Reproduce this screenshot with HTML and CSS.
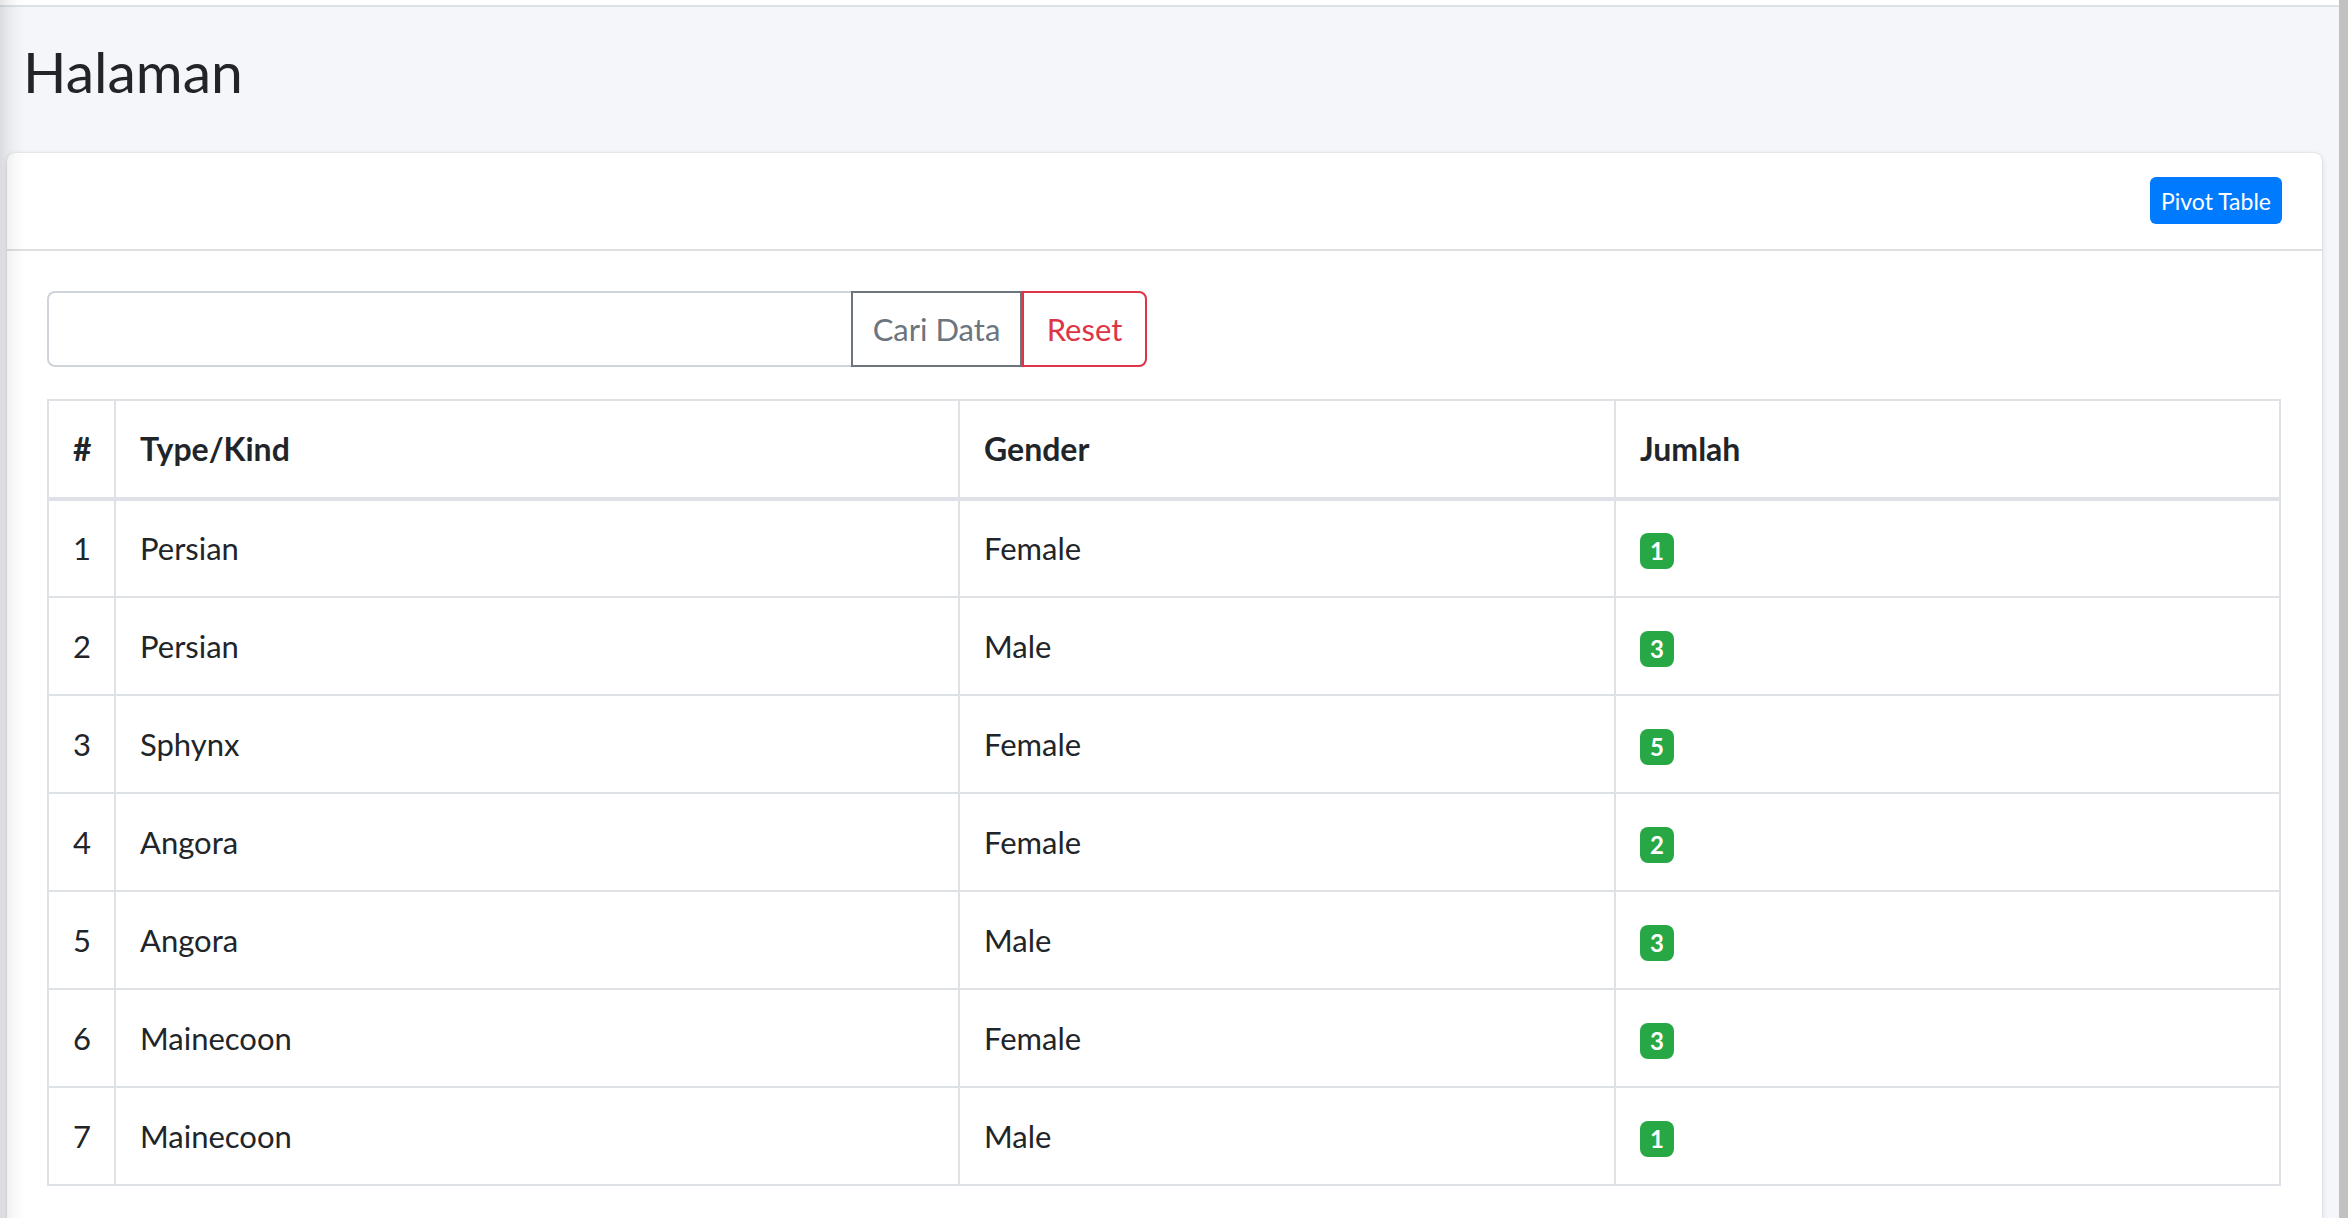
FILE: index.html
```html
<!DOCTYPE html>
<html lang="id">
<head>
<meta charset="utf-8">
<title>Halaman</title>
<link rel="stylesheet" href="styles.css">
</head>
<body>
<div class="page">
  <div class="main">
    <div class="topbar"></div>
    <div class="content-header">
      <h1>Halaman</h1>
    </div>
    <div class="card">
      <div class="card-header">
        <button class="btn-pivot">Pivot Table</button>
      </div>
      <div class="card-body">
        <div class="input-group">
          <input class="form-control" type="text">
          <button class="btn btn-search">Cari Data</button>
          <button class="btn btn-reset">Reset</button>
        </div>
        <table class="table">
          <colgroup>
            <col class="c-no"><col class="c-type"><col class="c-gender"><col class="c-jumlah">
          </colgroup>
          <thead>
            <tr><th>#</th><th>Type/Kind</th><th>Gender</th><th>Jumlah</th></tr>
          </thead>
          <tbody>
            <tr><td>1</td><td>Persian</td><td>Female</td><td><span class="badge">1</span></td></tr>
            <tr><td>2</td><td>Persian</td><td>Male</td><td><span class="badge">3</span></td></tr>
            <tr><td>3</td><td>Sphynx</td><td>Female</td><td><span class="badge">5</span></td></tr>
            <tr><td>4</td><td>Angora</td><td>Female</td><td><span class="badge">2</span></td></tr>
            <tr><td>5</td><td>Angora</td><td>Male</td><td><span class="badge">3</span></td></tr>
            <tr><td>6</td><td>Mainecoon</td><td>Female</td><td><span class="badge">3</span></td></tr>
            <tr><td>7</td><td>Mainecoon</td><td>Male</td><td><span class="badge">1</span></td></tr>
          </tbody>
        </table>
      </div>
    </div>
    <div class="edge-shadow"></div>
  </div>
  <div class="scrollbar"></div>
</div>
</body>
</html>
```

FILE: styles.css
```css
* { box-sizing: border-box; }
html, body { margin: 0; padding: 0; }
body {
  background: #f4f6f9;
  font-family: "Lato", "Liberation Sans", sans-serif;
  color: #212529;
  font-size: 32px;
  line-height: 1.5;
  overflow: hidden;
}
.page {
  display: flex;
  height: 1218px;
  overflow: hidden;
}
.main {
  flex: 1;
  position: relative;
  min-width: 0;
}
.scrollbar {
  width: 9px;
  background: #c1c1c1;
}
.topbar {
  height: 7px;
  background: #fff;
  border-bottom: 2px solid #dee2e6;
}
.content-header {
  padding: 30px 23px 0;
  height: 146px;
}
.content-header h1 {
  margin: 0;
  font-size: 57px;
  font-weight: 400;
  line-height: 1.2;
}
.card {
  margin: 0 17px 0 7px;
  background: #fff;
  border-radius: 8px;
  box-shadow: 0 0 2px rgba(0,0,0,.125), 0 2px 6px rgba(0,0,0,.12);
}
.card-header {
  display: flex;
  justify-content: flex-end;
  padding: 24px 40px 25px;
  border-bottom: 2px solid #dfdfdf;
}
.btn-pivot {
  height: 47px;
  padding: 0 11px;
  border: none;
  border-radius: 6px;
  background: #007bff;
  color: #fff;
  font-family: inherit;
  font-size: 23px;
}
.card-body {
  padding: 40px 40px 40px 40px;
}
.input-group {
  display: flex;
  width: 1100px;
  height: 76px;
  margin-bottom: 32px;
}
.form-control {
  width: 804px;
  height: 76px;
  border: 2px solid #ced4da;
  border-right: none;
  border-radius: 8px 0 0 8px;
  font-family: inherit;
  font-size: 32px;
  padding: 0 24px;
}
.btn {
  height: 76px;
  background: #fff;
  font-family: inherit;
  font-size: 31px;
  padding: 0;
  border: 2px solid;
}
.btn-search {
  width: 171px;
  color: #6c757d;
  border-color: #6c757d;
}
.btn-reset {
  width: 125px;
  color: #dc3545;
  border-color: #dc3545;
  border-left-width: 2px;
  border-radius: 0 8px 8px 0;
}
.table {
  width: 2232px;
  border-collapse: collapse;
  table-layout: fixed;
  border: 2px solid #dee2e6;
}
.c-no { width: 67px; }
.c-type { width: 844px; }
.c-gender { width: 656px; }
.c-jumlah { width: 665px; }
.table th, .table td {
  border: 2px solid #dee2e6;
  padding: 24px 24px;
  text-align: left;
  vertical-align: middle;
  height: 98px;
}
.table td {
  font-size: 31px;
}
.table th {
  font-weight: 700;
  border-bottom-width: 4px;
}
.badge {
  display: inline-block;
  background: #28a745;
  color: #fff;
  font-size: 24px;
  font-weight: 700;
  line-height: 1;
  padding: 6px 10px;
  border-radius: 8px;
}
.edge-shadow {
  position: absolute;
  left: 0;
  top: 0;
  bottom: 0;
  width: 26px;
  pointer-events: none;
  background: linear-gradient(to right, rgba(0,0,0,.11) 0, rgba(0,0,0,.06) 7px, rgba(0,0,0,.02) 16px, rgba(0,0,0,0) 26px);
}
```
